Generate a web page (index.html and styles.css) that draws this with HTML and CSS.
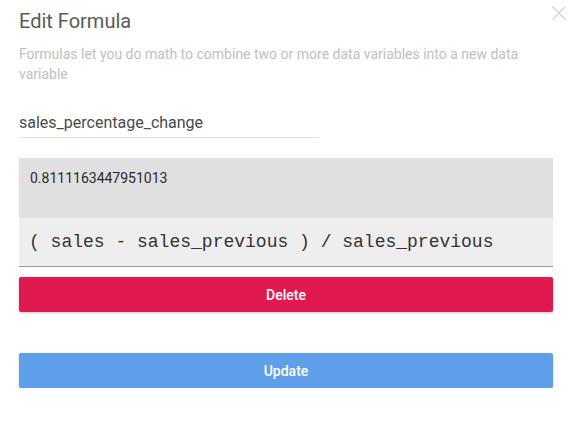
FILE: index.html
```html
<!DOCTYPE html>
<html>
<head>
<meta charset="utf-8">
<link rel="stylesheet" href="styles.css">
</head>
<body>
<div class="dialog">
  <button class="close" aria-label="Close">
    <svg width="14" height="14" viewBox="0 0 14 14"><path d="M0.5 0.5 L13.5 13.5 M13.5 0.5 L0.5 13.5" stroke="#cfcfcf" stroke-width="1.1" fill="none"/></svg>
  </button>
  <h1 class="title">Edit Formula</h1>
  <p class="desc">Formulas let you do math to combine two or more data variables into a new data variable</p>
  <div class="name-field">sales_percentage_change</div>
  <div class="result">0.8111163447951013</div>
  <div class="formula">( sales - sales_previous ) / sales_previous</div>
  <button class="btn btn-delete">Delete</button>
  <button class="btn btn-update">Update</button>
</div>
</body>
</html>
```
FILE: styles.css
```css
html, body {
  margin: 0;
  padding: 0;
  background: #ffffff;
}
body {
  font-family: Roboto, "Noto Sans", sans-serif;
}
.dialog {
  position: relative;
  padding: 9px 18px 0 19px;
  display: flex;
  flex-direction: column;
  align-items: stretch;
}
.close {
  position: absolute;
  top: 6px;
  right: 5px;
  width: 14px;
  height: 14px;
  padding: 0;
  border: 0;
  background: transparent;
  line-height: 0;
}
.title {
  margin: 0;
  font-size: 20px;
  line-height: 24px;
  font-weight: 400;
  color: #5a5a5a;
}
.desc {
  margin: 11px 0 0 0;
  font-size: 14px;
  line-height: 20px;
  color: #c0c0c0;
}
.name-field {
  margin-top: 29px;
  width: 300px;
  font-size: 16px;
  line-height: 20px;
  color: #4a4a4a;
  padding-bottom: 4px;
  border-bottom: 1px solid #e3e3e3;
}
.result {
  margin-top: 20px;
  height: 60px;
  box-sizing: border-box;
  padding: 10px 11px;
  background: #e0e0e0;
  font-size: 14px;
  line-height: 20px;
  color: #2a2a2a;
}
.formula {
  height: 24px;
  padding: 12px 10px;
  background: #eeeeee;
  border-bottom: 1px solid #9e9e9e;
  font-family: "Liberation Mono", "Courier New", monospace;
  font-size: 18px;
  line-height: 24px;
  color: #333333;
  white-space: pre;
}
.btn {
  display: block;
  width: 100%;
  height: 35px;
  border: 0;
  border-radius: 2px;
  font-family: Roboto, "Noto Sans", sans-serif;
  font-size: 14px;
  font-weight: 500;
  color: #ffffff;
  box-shadow: 0 1px 3px rgba(0, 0, 0, 0.22);
  padding: 0;
}
.btn-delete {
  margin-top: 10px;
  background: #e01a4f;
}
.btn-update {
  margin-top: 41px;
  background: #5f9fea;
}
```
